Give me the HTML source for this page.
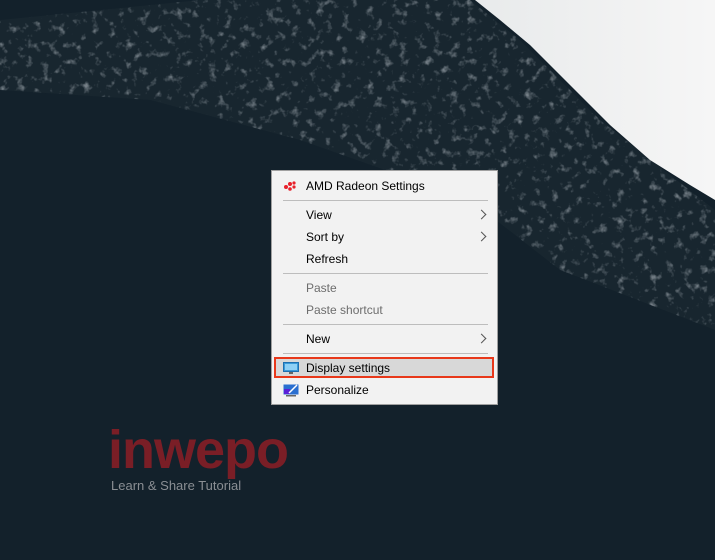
<!DOCTYPE html>
<html><head><style>
body{margin:0;width:715px;height:560px;overflow:hidden;background:#13212b;font-family:"Liberation Sans",sans-serif;position:relative}
.menu{position:absolute;left:271px;top:170px;width:227px;height:235px;background:#f2f2f2;border:1px solid #a0a0a0;box-sizing:border-box;font-size:12px;color:#000}
.it{position:absolute;left:34px;}
.g{color:#6d6d6d}
.sep{position:absolute;left:11px;width:205px;height:1px;background:#bdbdbd}
.arr{position:absolute;left:206px;width:6px;height:6px;border-top:1.3px solid #555;border-right:1.3px solid #555;transform:rotate(45deg)}
</style></head><body>
<svg width="715" height="560" style="position:absolute;left:0;top:0">
<defs>
<linearGradient id="s" x1="0" y1="0" x2="1" y2="0"><stop offset="0" stop-color="#e8eaeb"/><stop offset="1" stop-color="#f6f6f6"/></linearGradient>
<filter id="n"><feTurbulence type="fractalNoise" baseFrequency="0.12" numOctaves="3" seed="5"/><feColorMatrix values="0 0 0 0 0.8  0 0 0 0 0.85  0 0 0 0 0.9  0 0 0 3 -1.7"/></filter>
<clipPath id="c"><polygon points="0,20 200,0 470,0 520,40 600,120 715,210 715,330 560,270 470,200 300,140 150,100 0,90"/></clipPath>
</defs>
<rect width="715" height="560" fill="#13212b"/>
<polygon points="0,20 200,0 470,0 520,40 600,120 715,210 715,330 560,270 470,200 300,140 150,100 0,90" fill="#18262f"/>
<rect width="715" height="560" filter="url(#n)" clip-path="url(#c)" opacity="0.45"/>
<polygon points="475,0 715,0 715,200 690,185 650,160 610,125 570,85 530,45 500,20" fill="url(#s)"/>
</svg>
<div class="menu">
<svg style="position:absolute;left:11px;top:9px" width="14" height="12"><g fill="#e8202a"><circle cx="3" cy="7" r="2"/><circle cx="7" cy="4" r="2"/><circle cx="11" cy="3" r="1.6"/><circle cx="7" cy="9" r="1.8"/><circle cx="11" cy="7" r="1.6"/></g></svg>
<div class="it" style="top:8px">AMD Radeon Settings</div>
<div class="sep" style="top:29px"></div>
<div class="it" style="top:37px">View</div><div class="arr" style="top:40px"></div>
<div class="it" style="top:59px">Sort by</div><div class="arr" style="top:62px"></div>
<div class="it" style="top:81px">Refresh</div>
<div class="sep" style="top:102px"></div>
<div class="it g" style="top:110px">Paste</div>
<div class="it g" style="top:132px">Paste shortcut</div>
<div class="sep" style="top:153px"></div>
<div class="it" style="top:161px">New</div><div class="arr" style="top:164px"></div>
<div class="sep" style="top:182px"></div>
<div style="position:absolute;left:2px;top:186px;width:220px;height:21px;background:#d8d8d8;border:2px solid #e8381a;box-sizing:border-box"></div>
<svg style="position:absolute;left:11px;top:191px" width="16" height="12"><rect x="0.5" y="0.5" width="15" height="9" fill="#3a9ad9" stroke="#1e6fb0"/><rect x="2" y="2" width="12" height="6" fill="#8fd0f5"/><rect x="6" y="10" width="4" height="2" fill="#666"/></svg>
<div class="it" style="top:190px">Display settings</div>
<svg style="position:absolute;left:11px;top:213px" width="16" height="13"><rect x="0.5" y="0.5" width="15" height="10" fill="#2a6fd0"/><rect x="1" y="5" width="6" height="5" fill="#5a1fd8"/><path d="M6 9 L14 1" stroke="#fff" stroke-width="1.5"/><rect x="3" y="11" width="10" height="1.5" fill="#666"/></svg>
<div class="it" style="top:212px">Personalize</div>
</div>
<div style="position:absolute;left:108px;top:420px;font-size:54px;font-weight:bold;color:#7a1e26;letter-spacing:-1px;line-height:60px">inwepo</div>
<div style="position:absolute;left:111px;top:478px;font-size:13px;color:#8a8e93">Learn &amp; Share Tutorial</div>
</body></html>
